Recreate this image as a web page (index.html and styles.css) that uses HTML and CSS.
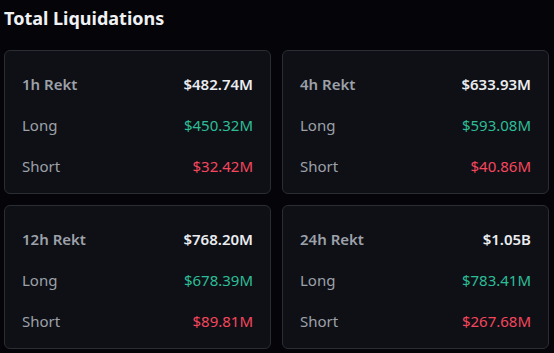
FILE: index.html
```html
<!DOCTYPE html>
<html>
<head>
<meta charset="utf-8">
<link rel="stylesheet" href="styles.css">
</head>
<body>
<div class="page">
  <h1 class="title">Total Liquidations</h1>
  <div class="grid">
    <div class="card">
      <div class="row head"><span class="label">1h Rekt</span><span class="value">$482.74M</span></div>
      <div class="row"><span class="label">Long</span><span class="long">$450.32M</span></div>
      <div class="row"><span class="label">Short</span><span class="short">$32.42M</span></div>
    </div>
    <div class="card">
      <div class="row head"><span class="label">4h Rekt</span><span class="value">$633.93M</span></div>
      <div class="row"><span class="label">Long</span><span class="long">$593.08M</span></div>
      <div class="row"><span class="label">Short</span><span class="short">$40.86M</span></div>
    </div>
    <div class="card">
      <div class="row head"><span class="label">12h Rekt</span><span class="value">$768.20M</span></div>
      <div class="row"><span class="label">Long</span><span class="long">$678.39M</span></div>
      <div class="row"><span class="label">Short</span><span class="short">$89.81M</span></div>
    </div>
    <div class="card">
      <div class="row head"><span class="label">24h Rekt</span><span class="value">$1.05B</span></div>
      <div class="row"><span class="label">Long</span><span class="long">$783.41M</span></div>
      <div class="row"><span class="label">Short</span><span class="short">$267.68M</span></div>
    </div>
  </div>
</div>
</body>
</html>
```
FILE: styles.css
```css
html, body {
  margin: 0;
  padding: 0;
  background: #050509;
}
body {
  font-family: "Noto Sans", "Open Sans", sans-serif;
  color: #eaecef;
}
.page {
  padding: 4px 5px 0 4px;
}
.title {
  margin: 0;
  font-size: 18px;
  font-weight: 700;
  line-height: 28px;
  color: #f0f1f3;
  height: 46px;
}
.grid {
  display: grid;
  grid-template-columns: 267px 267px;
  column-gap: 11px;
  row-gap: 11px;
}
.card {
  box-sizing: border-box;
  height: 144px;
  background: #0e1016;
  border: 1px solid #2a2d34;
  border-radius: 6px;
  padding: 12px 17px 0 17px;
}
.row {
  display: flex;
  justify-content: space-between;
  align-items: center;
  height: 41px;
  font-size: 15px;
}
.label {
  color: #9da1a9;
}
.head .label {
  font-weight: 600;
}
.value {
  font-weight: 600;
  color: #eaecef;
}
.long {
  color: #2dbd96;
}
.short {
  color: #f6465d;
}
```
